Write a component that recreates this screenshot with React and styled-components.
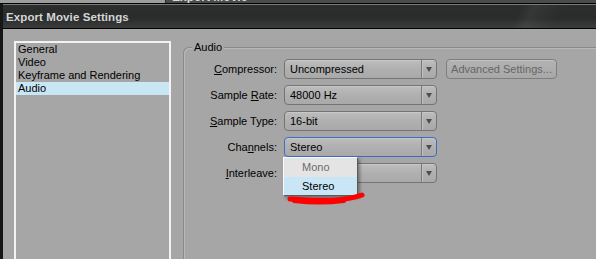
import React from "react";
import styled, { createGlobalStyle, css } from "styled-components";

const GlobalStyle = createGlobalStyle`
  html, body { margin:0; padding:0; background:#a6a6a6; }
  body {
    font-family:"Liberation Sans", Arial, sans-serif;
    font-size:11px;
    overflow:hidden;
  }
`;

const Screen = styled.div`
  width:596px;
  height:259px;
  overflow:hidden;
  display:flex;
  flex-direction:column;
  background:#a6a6a6;
`;

// strip of the window lying behind the dialog
const Behind = styled.div`
  flex-shrink:0;
  height:3px;
  display:flex;
  overflow:hidden;
  border-bottom:1px solid #000;
`;

const BehindLeft = styled.div`
  width:165px;
  background:#9d9d9d;
`;

const BehindWin = styled.div`
  flex:1;
  background:#4b4b4b;
  border-left:1px solid #2a2a2a;
  padding-left:6px;
  color:#d8d8d8;
  font-weight:bold;
  font-size:12px;
  line-height:12px;
  span { display:block; margin-top:-9px; }
`;

const Window = styled.div`
  flex:1;
  min-height:0;
  display:flex;
  flex-direction:column;
  border-left:3px solid #161616;
`;

const TitleBar = styled.div`
  flex-shrink:0;
  height:23px;
  border-top:1px solid #7a7a7a;
  border-bottom:1px solid #000;
  background:
    linear-gradient(115deg, transparent 86%, rgba(255,255,255,0.05) 88%, transparent 93%),
    linear-gradient(#2c2d2d, #2a2b2b 55%, #3b3c3c);
  color:#d6d6d6;
  font-weight:bold;
  font-size:11.5px;
  line-height:24px;
  padding-left:3px;
  letter-spacing:0.1px;
`;

const Body = styled.div`
  flex:1;
  min-height:0;
  overflow:hidden;
  display:flex;
  align-items:flex-start;
`;

const ListBox = styled.div`
  flex-shrink:0;
  margin:12px 0 0 11px;
  width:153px;
  height:260px;
  border:2px solid #f3f3f3;
  display:flex;
  flex-direction:column;
`;

const ListItem = styled.div`
  height:13px;
  line-height:13px;
  padding-left:2px;
  color:#000;
  ${p => p.$selected && css`background:#c8e6f4;`}
`;

const GroupBox = styled.div`
  position:relative;
  margin:18px 0 0 12px;
  flex:1;
  height:300px;
  padding-top:11px;
  border-left:1px solid #8a8a8a;
  border-top:1px solid #8a8a8a;
  border-top-left-radius:6px;
  box-shadow:inset 1px 1px 0 #b9b9b9;
`;

const Legend = styled.div`
  position:absolute;
  top:-7px;
  left:8px;
  padding:0 2px;
  line-height:13px;
  background:#a6a6a6;
  color:#000;
`;

const Form = styled.div`
  display:grid;
  grid-template-columns:94px 153px auto;
  grid-auto-rows:20px;
  column-gap:6px;
  row-gap:6px;
  align-items:center;
`;

const Label = styled.div`
  text-align:right;
  padding-right:1px;
  line-height:20px;
  color:#000;
`;

const Key = styled.span`
  text-decoration:underline;
`;

const Select = styled.div`
  position:relative;
  display:flex;
  height:20px;
  box-sizing:border-box;
  border:1px solid ${p => (p.$focused ? "#3d6cc2" : "#747474")};
  border-radius:4px;
  background:linear-gradient(#bdbdbd, #b0b0b0 50%, #a9a9a9);
  box-shadow:inset 0 1px 0 #c8c8c8;
`;

const SelectValue = styled.div`
  flex:1;
  padding-left:5px;
  line-height:18px;
  color:#000;
`;

const SelectArrow = styled.div`
  width:14px;
  display:flex;
  align-items:center;
  justify-content:center;
  border-left:1px solid #7a7a7a;
  box-shadow:inset 1px 0 0 #c2c2c2;
  &::after {
    content:"";
    border-left:3.5px solid transparent;
    border-right:3.5px solid transparent;
    border-top:5px solid #4e4e4e;
  }
`;

const Button = styled.div`
  width:111px;
  height:20px;
  margin-left:3px;
  box-sizing:border-box;
  border:1px solid #7e7e7e;
  border-radius:4px;
  background:linear-gradient(#b3b3b3, #a8a8a8);
  box-shadow:inset 0 1px 0 #c0c0c0;
  color:#666;
  text-align:center;
  line-height:18px;
`;

const Popup = styled.div`
  position:absolute;
  top:19px;
  left:-2px;
  width:73px;
  z-index:2;
  background:#e4e4e4;
  border:1px solid;
  border-color:#fafafa #5a5a5a #5a5a5a #fafafa;
  box-shadow:2px 2px 3px rgba(0,0,0,0.35);
`;

const PopupItem = styled.div`
  height:${p => (p.$selected ? 18 : 19)}px;
  line-height:${p => (p.$selected ? 18 : 19)}px;
  padding-left:18px;
  color:${p => (p.$selected ? "#000" : "#6c6c6c")};
  background:${p => (p.$selected ? "#c8e6f5" : "#e4e4e4")};
`;

const Scribble = styled.svg`
  position:absolute;
  left:0;
  top:calc(100% - 3px);
  z-index:3;
  overflow:visible;
`;

const fields = [
  { label: <><Key>C</Key>ompressor:</>, value: "Uncompressed", button: "Advanced Settings..." },
  { label: <>Sample <Key>R</Key>ate:</>, value: "48000 Hz" },
  { label: <><Key>S</Key>ample Type:</>, value: "16-bit" },
  { label: <>Cha<Key>n</Key>nels:</>, value: "Stereo", focused: true, open: true },
  { label: <><Key>I</Key>nterleave:</>, value: "" },
];

const pages = ["General", "Video", "Keyframe and Rendering", "Audio"];

export default function App() {
  return (
    <>
      <GlobalStyle />
      <Screen>
        <Behind>
          <BehindLeft />
          <BehindWin><span>Export Movie</span></BehindWin>
        </Behind>
        <Window>
          <TitleBar>Export Movie Settings</TitleBar>
          <Body>
            <ListBox>
              {pages.map(p => (
                <ListItem key={p} $selected={p === "Audio"}>{p}</ListItem>
              ))}
            </ListBox>
            <GroupBox>
              <Legend>Audio</Legend>
              <Form>
                {fields.map((f, i) => (
                  <React.Fragment key={i}>
                    <Label>{f.label}</Label>
                    <Select $focused={f.focused}>
                      <SelectValue>{f.value}</SelectValue>
                      <SelectArrow />
                      {f.open && (
                        <Popup>
                          <PopupItem>Mono</PopupItem>
                          <PopupItem $selected>Stereo</PopupItem>
                          <Scribble width="82" height="14" viewBox="0 0 82 14">
                            <path d="M6 7 C 20 8, 36 9, 52 8 S 72 5, 78 3"
                              fill="none" stroke="#ff0000" strokeWidth="5" strokeLinecap="round" />
                            <path d="M10 9 C 26 11, 44 11, 60 9"
                              fill="none" stroke="#ff0000" strokeWidth="4" strokeLinecap="round" />
                          </Scribble>
                        </Popup>
                      )}
                    </Select>
                    {f.button ? <Button>{f.button}</Button> : <span />}
                  </React.Fragment>
                ))}
              </Form>
            </GroupBox>
          </Body>
        </Window>
      </Screen>
    </>
  );
}
